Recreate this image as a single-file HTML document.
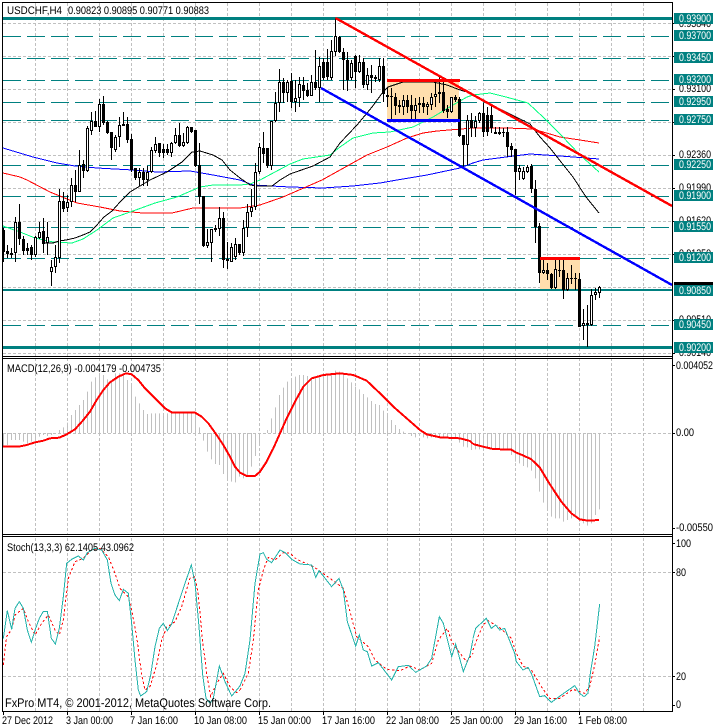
<!DOCTYPE html>
<html><head><meta charset="utf-8"><title>USDCHF,H4</title>
<style>html,body{margin:0;padding:0;background:#fff;width:713px;height:728px;overflow:hidden}svg{display:block}text{font-family:"Liberation Sans",sans-serif;font-size:11px;fill:#000}</style></head>
<body>
<svg width="713" height="728" viewBox="0 0 713 728" xmlns="http://www.w3.org/2000/svg" shape-rendering="crispEdges" fill="none">
<!-- grid -->
<path stroke="#c0c0c0" stroke-dasharray="3 2" d="M3 23.5H672M3 56.5H672M3 89.5H672M3 122.5H672M3 155.5H672M3 188.5H672M3 221.5H672M3 254.5H672M3 287.5H672M3 320.5H672M3 353.5H672M3 433.5H672M3 572.5H672M3 676.5H672"/>
<path stroke="#c0c0c0" stroke-dasharray="3 2" d="M35.5 3V711M67.5 3V711M99.5 3V711M131.5 3V711M163.5 3V711M195.5 3V711M227.5 3V711M259.5 3V711M291.5 3V711M323.5 3V711M355.5 3V711M387.5 3V711M419.5 3V711M451.5 3V711M483.5 3V711M515.5 3V711M547.5 3V711M579.5 3V711M611.5 3V711M643.5 3V711"/>
<rect x="3" y="357" width="669" height="1" fill="#fff"/><rect x="3" y="535" width="669" height="1" fill="#fff"/>
<!-- horizontal levels -->
<path stroke="#008080" stroke-dasharray="18 6" d="M3 36.5H672M3 58.5H672M3 80.5H672M3 102.5H672M3 120.5H672M3 165.5H672M3 196.5H672M3 227.5H672M3 258.5H672M3 325.5H672"/>
<rect x="3" y="17" width="669" height="3" fill="#008080"/>
<rect x="3" y="289" width="669" height="2" fill="#008080"/>
<rect x="3" y="346" width="669" height="3" fill="#008080"/>
<!-- boxes -->
<rect x="387" y="80" width="72" height="41" fill="#ffdead"/>
<rect x="540" y="258" width="40" height="31" fill="#ffdead"/>
<!-- moving averages -->
<polyline stroke="#0000ff" points="3,148 33,157 57,163 75,166 97,168 133,170 157,172 190,171 213,175 240,180 253,185 290,187 323,188 353,186 380,183 397,180 427,175 460,168 473,163 483,160 506,157 530,154 560,156 599,159"/>
<polyline stroke="#ff0000" points="3,173 20,177 27,180 50,192 77,203 100,207 120,211 143,213 172,213 193,208 240,208 260,205 283,197 322,180 340,170 367,155 387,147 407,138 423,133 437,131 473,128 506,128 533,129 560,137 580,140 599,143"/>
<polyline stroke="#00ff7f" points="3,226 20,232 35,238 53,242 72,243 83,239 97,230 113,218 133,211 155,203 177,197 200,187 213,185 240,185 250,184 260,180 290,164 303,159 330,155 340,147 353,138 373,133 390,132 413,127 433,117 453,105 467,97 473,95 490,93 506,97 528,103 543,117 561,135 580,155 599,172"/>
<polyline stroke="#000" points="43,243 53,243 59,241 66,240 75,238 83,235 90,232 96,226 104,217 112,211 120,202 130,192 140,186 150,180 167,172 182,162 192,152 200,151 213,155 222,160 230,170 240,178 250,185 258,186 272,186 280,180 290,174 313,166 330,157 340,143 357,125 372,107 383,92 388,87 403,82 413,82 433,82 447,85 460,90 470,93 486,102 506,112 530,124 540,137 550,148 561,162 573,177 586,197 599,213"/>
<!-- candles: wicks -->
<path stroke="#000" d="M3.5 228V262M7.5 245V258M11.5 248V258M15.5 217V262M19.5 204V245M23.5 236V255M27.5 243V255M31.5 245V260M35.5 236V257M39.5 222V239M43.5 218V253M47.5 222V255M51.5 260V286M55.5 245V273M59.5 189V263M63.5 192V212M67.5 195V212M71.5 178V207M75.5 170V202M79.5 150V192M83.5 160V178M87.5 126V172M91.5 112V135M95.5 111V127M99.5 99V132M103.5 96V125M107.5 121V134M111.5 132V160M115.5 135V152M119.5 117V147M123.5 112V126M127.5 117V143M131.5 134V172M135.5 168V180M139.5 168V186M143.5 168V186M147.5 166V186M151.5 147V173M155.5 137V153M159.5 143V157M163.5 144V158M167.5 144V155M171.5 142V157M175.5 128V144M179.5 123V147M183.5 133V147M187.5 126V144M191.5 127V133M195.5 130V167M199.5 143V204M203.5 196V247M207.5 229V248M211.5 229V262M215.5 225V232M219.5 207V236M223.5 212V268M227.5 242V269M231.5 243V262M235.5 238V260M239.5 244V255M243.5 220V256M247.5 204V237M251.5 189V217M255.5 163V210M259.5 143V174M263.5 132V163M267.5 148V168M271.5 121V170M275.5 92V122M279.5 69V112M283.5 78V103M287.5 80V102M291.5 73V108M295.5 80V112M299.5 77V107M303.5 77V100M307.5 83V97M311.5 75V96M315.5 50V90M319.5 57V102M323.5 58V80M327.5 49V80M331.5 40V80M335.5 18V56M339.5 36V53M343.5 48V90M347.5 52V91M351.5 60V80M355.5 55V88M359.5 55V73M363.5 58V88M367.5 68V90M371.5 65V93M375.5 75V82M379.5 58V82M383.5 58V102M387.5 88V107M391.5 88V120M395.5 93V115M399.5 100V113M403.5 95V115M407.5 95V113M411.5 95V120M415.5 98V120M419.5 97V113M423.5 97V113M427.5 102V115M431.5 93V110M435.5 80V107M439.5 77V103M443.5 78V113M447.5 105V118M451.5 97V113M455.5 95V102M459.5 97V137M463.5 135V168M467.5 115V165M471.5 113V137M475.5 116V137M479.5 112V123M483.5 103V137M487.5 107V136M491.5 106V133M495.5 127V134M499.5 127V135M503.5 128V137M507.5 127V157M511.5 143V157M515.5 149V195M519.5 165V180M523.5 167V180M527.5 165V173M531.5 164V193M535.5 180V243M539.5 223V283M543.5 260V274M547.5 263V280M551.5 273V289M555.5 259V289M559.5 260V277M563.5 259V299M567.5 273V291M571.5 265V284M575.5 273V290M579.5 273V327M583.5 309V340M587.5 305V347M591.5 289V326M595.5 288V300M599.5 286V298"/>
<!-- candles: bodies -->
<path stroke="#000" stroke-width="3" d="M3.5 230V252M7.5 251V254M11.5 253V255M15.5 222V253M19.5 222V239M23.5 239V251M27.5 248V251M31.5 247V255M35.5 237V255M39.5 232V238M43.5 231V244M47.5 237V243M51.5 267V272M55.5 257V267M59.5 201V258M63.5 201V209M67.5 202V208M71.5 185V202M75.5 185V192M79.5 165V192M83.5 164V171M87.5 128V171M91.5 121V131M95.5 121V127M99.5 104V127M103.5 104V123M107.5 122V133M111.5 132V148M115.5 137V150M119.5 125V137M123.5 124V126M127.5 124V140M131.5 139V170M135.5 168V178M139.5 172V178M143.5 172V180M147.5 172V180M151.5 150V172M155.5 144V151M159.5 143V153M163.5 149V153M167.5 149V153M171.5 143V153M175.5 135V143M179.5 135V146M183.5 142V146M187.5 127V143M191.5 127V132M195.5 130V166M199.5 165V197M203.5 196V246M207.5 242V246M211.5 229V243M215.5 228V230M219.5 218V229M223.5 218V260M227.5 259V261M231.5 247V262M235.5 244V257M239.5 244V253M243.5 228V253M247.5 212V228M251.5 207V212M255.5 172V207M259.5 147V172M263.5 148V154M267.5 148V166M271.5 121V166M275.5 103V121M279.5 82V103M283.5 82V93M287.5 82V93M291.5 81V102M295.5 98V102M299.5 84V98M303.5 85V91M307.5 90V96M311.5 82V96M315.5 82V88M319.5 66V88M323.5 62V78M327.5 62V77M331.5 51V78M335.5 36V52M339.5 37V52M343.5 52V60M347.5 60V80M351.5 63V78M355.5 56V72M359.5 62V72M363.5 62V85M367.5 75V85M371.5 75V78M375.5 77V79M379.5 66V80M383.5 66V94M387.5 95V97M391.5 96V97M395.5 97V106M399.5 105V107M403.5 100V107M407.5 100V107M411.5 105V111M415.5 105V111M419.5 103V105M423.5 103V107M427.5 104V107M431.5 97V105M435.5 94V97M439.5 92V94M443.5 92V111M447.5 109V112M451.5 97V112M455.5 97V100M459.5 99V136M463.5 135V145M467.5 120V145M471.5 120V128M475.5 121V128M479.5 113V121M483.5 113V132M487.5 115V132M491.5 115V128M495.5 132V134M499.5 132V134M503.5 132V133M507.5 132V147M511.5 146V150M515.5 149V172M519.5 168V172M523.5 171V179M527.5 167V172M531.5 166V189M535.5 189V227M539.5 226V273M543.5 270V273M547.5 270V274M551.5 274V288M555.5 269V288M559.5 270V271M563.5 270V290M567.5 278V290M571.5 278V279M575.5 278V279M579.5 279V327M583.5 323V326M587.5 323V325M591.5 295V325M595.5 292V295M599.5 287V293"/>
<path stroke="#fff" d="M15.5 223V252M35.5 238V254M39.5 233V237M47.5 238V242M51.5 268V271M55.5 258V266M59.5 202V257M67.5 203V207M71.5 186V201M79.5 166V191M87.5 129V170M91.5 122V130M99.5 105V126M115.5 138V149M119.5 126V136M139.5 173V177M147.5 173V179M151.5 151V171M155.5 145V150M171.5 144V152M175.5 136V142M183.5 143V145M187.5 128V142M207.5 243V245M211.5 230V242M219.5 219V228M231.5 248V261M235.5 245V256M243.5 229V252M247.5 213V227M251.5 208V211M255.5 173V206M259.5 148V171M271.5 122V165M275.5 104V120M279.5 83V102M287.5 83V92M295.5 99V101M299.5 85V97M311.5 83V95M319.5 67V87M331.5 52V77M335.5 37V51M351.5 64V77M359.5 63V71M367.5 76V84M379.5 67V79M403.5 101V106M415.5 106V110M419.5 104V104M427.5 105V106M431.5 98V104M435.5 95V96M439.5 93V93M451.5 98V111M467.5 121V144M475.5 122V127M479.5 114V120M519.5 169V171M523.5 172V178M527.5 168V171M543.5 271V272M555.5 270V287M567.5 279V289M583.5 324V325M591.5 296V324M595.5 293V294M599.5 288V292"/>
<!-- box edges -->
<rect x="387" y="79" width="73" height="3" fill="#ff0000"/>
<rect x="387" y="119" width="73" height="3" fill="#0000ff"/>
<rect x="540" y="257" width="40" height="3" fill="#ff0000"/>
<!-- trend lines -->
<line x1="335.5" y1="18" x2="672" y2="206" stroke="#ff0000" stroke-width="2.4"/>
<line x1="321" y1="88" x2="672" y2="285" stroke="#0000ff" stroke-width="2.4"/>
<!-- MACD histogram -->
<g transform="translate(0,350) scale(1,.33333)"><path stroke="#c0c0c0" d="M3.5 249V290M7.5 249V285M11.5 249V270M15.5 249V270M19.5 249V270M23.5 249V275M27.5 249V280M31.5 249V275M35.5 249V265M39.5 249V260M43.5 249V255M47.5 249V258M51.5 249V255M59.5 249V240M63.5 249V232M67.5 249V218M71.5 249V195M75.5 249V180M79.5 249V165M83.5 249V150M87.5 249V125M91.5 249V95M95.5 249V82M99.5 249V78M103.5 249V75M107.5 249V88M111.5 249V95M115.5 249V70M119.5 249V70M123.5 249V75M127.5 249V90M131.5 249V100M135.5 249V140M139.5 249V160M143.5 249V180M147.5 249V192M151.5 249V190M155.5 249V190M159.5 249V190M163.5 249V190M167.5 249V190M171.5 249V190M175.5 249V190M179.5 249V190M183.5 249V190M187.5 249V190M191.5 249V190M195.5 249V190M199.5 249V232M203.5 249V272M207.5 249V305M211.5 249V328M215.5 249V342M219.5 249V345M223.5 249V372M227.5 249V388M231.5 249V395M235.5 249V397M239.5 249V380M243.5 249V385M247.5 249V375M251.5 249V350M255.5 249V318M259.5 249V280M267.5 249V240M271.5 249V205M275.5 249V172M279.5 249V135M283.5 249V113M287.5 249V95M291.5 249V87M295.5 249V80M299.5 249V75M303.5 249V75M307.5 249V78M311.5 249V82M315.5 249V85M319.5 249V75M323.5 249V75M327.5 249V72M331.5 249V70M335.5 249V62M339.5 249V65M343.5 249V72M347.5 249V85M351.5 249V97M355.5 249V110M359.5 249V118M363.5 249V132M367.5 249V142M371.5 249V153M375.5 249V162M379.5 249V165M383.5 249V182M387.5 249V197M391.5 249V210M395.5 249V225M399.5 249V237M403.5 249V245M411.5 249V258M415.5 249V262M419.5 249V258M423.5 249V262M427.5 249V265M431.5 249V262M435.5 249V262M439.5 249V262M443.5 249V260M447.5 249V265M451.5 249V268M455.5 249V266M459.5 249V278M463.5 249V290M467.5 249V292M471.5 249V300M475.5 249V298M479.5 249V298M483.5 249V295M487.5 249V295M491.5 249V295M495.5 249V295M499.5 249V295M503.5 249V298M507.5 249V300M511.5 249V315M515.5 249V335M519.5 249V340M523.5 249V348M527.5 249V352M531.5 249V362M535.5 249V385M539.5 249V425M543.5 249V458M547.5 249V480M551.5 249V500M555.5 249V505M559.5 249V505M563.5 249V515M567.5 249V510M571.5 249V505M575.5 249V500M579.5 249V515M583.5 249V520M587.5 249V527M591.5 249V520M595.5 249V495M599.5 249V478"/></g>
<!-- MACD line -->
<g stroke="#ff0000" stroke-width="6">
<polyline transform="translate(0,350) scale(.33333)" points="8,290 55,290 80,285 105,277 130,272 150,265 178,263 200,253 225,238 250,210 270,185 290,150 310,120 330,97 355,80 378,70 395,73 415,90 435,115 465,145 495,175 515,187 585,188 605,200 625,220 650,255 670,285 690,320 705,350 720,368"/>
<polyline transform="translate(240,350) scale(.33333)" points="0,368 20,378 45,378 60,365 80,335 100,295 120,250 140,205 165,155 190,110 215,85 250,75 300,70 340,75 380,92 420,130 460,170 500,205 540,240 560,253 600,262 660,265 690,273 699,282"/>
<polyline transform="translate(473,350) scale(.33333)" points="0,282 30,290 60,297 115,299 130,308 150,316 175,328 200,352 230,402 265,455 295,490 320,508 345,512 378,510"/>
</g>
<!-- Stochastic -->
<g stroke="#ff0000" stroke-width="3" stroke-dasharray="7 7">
<polyline transform="translate(0,540) scale(.33333)" points="10,375 20,290 35,268 45,225 70,205 85,245 105,285 125,250 145,225 165,270 178,285 190,240 205,115 225,65 250,55 275,30 300,25 325,50 345,100 360,145 385,170 395,210 410,290 425,405 435,450 450,440 470,375 485,300 500,262 525,245 545,200 570,115 585,110 595,165 607,295 620,400 632,470 650,430 670,400 690,440 710,458 720,450"/>
<polyline transform="translate(240,540) scale(.33333)" points="0,450 25,400 40,300 55,150 70,90 85,52 105,60 130,38 150,40 170,58 220,80 235,90 270,115 310,145 330,215 350,290 385,320 405,360 440,388 480,392 510,378 540,390 575,370 595,300 622,265 635,305 660,340 680,365 699,340"/>
<polyline transform="translate(473,530) scale(.33333)" points="0,360 15,320 30,285 45,272 80,293 115,325 130,370 150,408 175,420 205,470 230,505 260,505 300,478 335,490 350,470 365,405 380,320"/>
</g>
<g stroke="#20b2aa" stroke-width="3">
<polyline transform="translate(0,540) scale(.33333)" points="10,295 22,212 35,268 45,205 58,185 70,205 82,270 94,307 107,265 118,235 130,214 142,214 154,295 166,312 178,265 190,170 200,70 215,58 235,48 250,60 262,38 285,25 305,30 322,60 333,130 345,165 358,182 370,148 385,160 395,250 405,360 415,450 422,468 440,455 452,405 465,320 478,265 490,250 502,272 515,252 540,175 555,130 574,75 585,130 597,260 608,405 618,475 630,490 640,475 658,378 675,425 695,468 720,438"/>
<polyline transform="translate(240,540) scale(.33333)" points="0,438 15,400 30,300 45,130 60,42 70,38 80,58 95,68 120,30 135,38 155,58 180,72 215,75 227,112 237,92 275,140 297,115 310,150 322,245 347,318 358,285 370,330 382,335 395,378 415,368 455,420 475,380 505,376 527,397 560,378 575,355 598,230 610,250 635,350 647,312 670,395 690,345 699,298"/>
<polyline transform="translate(473,530) scale(.33333)" points="0,325 8,295 40,265 55,295 68,285 80,300 95,295 125,370 130,395 150,420 165,412 175,430 200,500 215,497 235,517 275,488 305,467 320,490 333,500 345,490 352,430 365,350 380,222"/>
</g>
<!-- frames -->
<path stroke="#000" d="M2.5 2.5H672.5V711.5H2.5ZM2.5 356.5H672.5M2.5 358.5H672.5M2.5 534.5H672.5M2.5 536.5H672.5"/>
<!-- ticks -->
<path stroke="#000" d="M672 23.5H675M672 56.5H675M672 89.5H675M672 122.5H675M672 155.5H675M672 188.5H675M672 221.5H675M672 254.5H675M672 320.5H675M672 353.5H675M672 365.5H675M672 433.5H675M672 528.5H675M672 543.5H675M672 572.5H675M672 676.5H675M672 705.5H675M3.5 711V715M67.5 711V715M131.5 711V715M195.5 711V715M259.5 711V715M323.5 711V715M387.5 711V715M451.5 711V715M515.5 711V715M579.5 711V715"/>
<!-- axis price text -->
<g text-rendering="geometricPrecision">
<text x="679" y="27" textLength="32" lengthAdjust="spacingAndGlyphs">0.93840</text>
<text x="679" y="92" textLength="32" lengthAdjust="spacingAndGlyphs">0.93100</text>
<text x="679" y="158" textLength="32" lengthAdjust="spacingAndGlyphs">0.92360</text>
<text x="679" y="191" textLength="32" lengthAdjust="spacingAndGlyphs">0.91990</text>
<text x="679" y="224" textLength="32" lengthAdjust="spacingAndGlyphs">0.91620</text>
<text x="679" y="257" textLength="32" lengthAdjust="spacingAndGlyphs">0.91250</text>
<text x="679" y="323" textLength="32" lengthAdjust="spacingAndGlyphs">0.90510</text>
<text x="679" y="356" textLength="32" lengthAdjust="spacingAndGlyphs">0.90140</text>
<rect x="674" y="282" width="39" height="11" fill="#000"/>
<rect x="674" y="13" width="39" height="11" fill="#008080"/>
<rect x="674" y="30" width="39" height="11" fill="#008080"/>
<rect x="674" y="52" width="39" height="11" fill="#008080"/>
<rect x="674" y="74" width="39" height="11" fill="#008080"/>
<rect x="674" y="96" width="39" height="11" fill="#008080"/>
<rect x="674" y="114" width="39" height="11" fill="#008080"/>
<rect x="674" y="159" width="39" height="11" fill="#008080"/>
<rect x="674" y="190" width="39" height="11" fill="#008080"/>
<rect x="674" y="221" width="39" height="11" fill="#008080"/>
<rect x="674" y="252" width="39" height="11" fill="#008080"/>
<rect x="674" y="285" width="39" height="11" fill="#008080"/>
<rect x="674" y="319" width="39" height="11" fill="#008080"/>
<rect x="674" y="342" width="39" height="11" fill="#008080"/>
<g style="fill:#fff">
<text style="fill:#fff" x="679" y="22" textLength="32" lengthAdjust="spacingAndGlyphs">0.93900</text>
<text style="fill:#fff" x="679" y="39" textLength="32" lengthAdjust="spacingAndGlyphs">0.93700</text>
<text style="fill:#fff" x="679" y="61" textLength="32" lengthAdjust="spacingAndGlyphs">0.93450</text>
<text style="fill:#fff" x="679" y="83" textLength="32" lengthAdjust="spacingAndGlyphs">0.93200</text>
<text style="fill:#fff" x="679" y="105" textLength="32" lengthAdjust="spacingAndGlyphs">0.92950</text>
<text style="fill:#fff" x="679" y="123" textLength="32" lengthAdjust="spacingAndGlyphs">0.92750</text>
<text style="fill:#fff" x="679" y="168" textLength="32" lengthAdjust="spacingAndGlyphs">0.92250</text>
<text style="fill:#fff" x="679" y="199" textLength="32" lengthAdjust="spacingAndGlyphs">0.91900</text>
<text style="fill:#fff" x="679" y="230" textLength="32" lengthAdjust="spacingAndGlyphs">0.91550</text>
<text style="fill:#fff" x="679" y="261" textLength="32" lengthAdjust="spacingAndGlyphs">0.91200</text>
<text style="fill:#fff" x="679" y="294" textLength="32" lengthAdjust="spacingAndGlyphs">0.90850</text>
<text style="fill:#fff" x="679" y="328" textLength="32" lengthAdjust="spacingAndGlyphs">0.90450</text>
<text style="fill:#fff" x="679" y="351" textLength="32" lengthAdjust="spacingAndGlyphs">0.90200</text>
</g>
<text x="676" y="369" textLength="37" lengthAdjust="spacingAndGlyphs">0.004052</text>
<text x="676" y="436" textLength="18" lengthAdjust="spacingAndGlyphs">0.00</text>
<text x="676" y="531" textLength="37" lengthAdjust="spacingAndGlyphs">-0.00550</text>
<text x="676" y="547" textLength="15" lengthAdjust="spacingAndGlyphs">100</text>
<text x="676" y="576" textLength="10" lengthAdjust="spacingAndGlyphs">80</text>
<text x="676" y="680" textLength="10" lengthAdjust="spacingAndGlyphs">20</text>
<text x="676" y="708" textLength="5" lengthAdjust="spacingAndGlyphs">0</text>
<!-- labels -->
<text x="7" y="14" textLength="55" lengthAdjust="spacingAndGlyphs">USDCHF,H4</text>
<text x="68" y="14" textLength="141" lengthAdjust="spacingAndGlyphs">0.90823 0.90895 0.90771 0.90883</text>
<text x="7" y="372" textLength="154" lengthAdjust="spacingAndGlyphs">MACD(12,26,9) -0.004179 -0.004735</text>
<text x="7" y="551" textLength="127" lengthAdjust="spacingAndGlyphs">Stoch(13,3,3) 62.1405 43.0962</text>
<text x="5" y="707" textLength="266" lengthAdjust="spacingAndGlyphs" style="font-size:12.5px">FxPro MT4, © 2001-2012, MetaQuotes Software Corp.</text>
<text x="2" y="724" textLength="51" lengthAdjust="spacingAndGlyphs">27 Dec 2012</text>
<text x="66" y="724" textLength="47" lengthAdjust="spacingAndGlyphs">3 Jan 00:00</text>
<text x="130" y="724" textLength="48" lengthAdjust="spacingAndGlyphs">7 Jan 16:00</text>
<text x="194" y="724" textLength="53" lengthAdjust="spacingAndGlyphs">10 Jan 08:00</text>
<text x="258" y="724" textLength="53" lengthAdjust="spacingAndGlyphs">15 Jan 00:00</text>
<text x="322" y="724" textLength="53" lengthAdjust="spacingAndGlyphs">17 Jan 16:00</text>
<text x="386" y="724" textLength="53" lengthAdjust="spacingAndGlyphs">22 Jan 08:00</text>
<text x="450" y="724" textLength="53" lengthAdjust="spacingAndGlyphs">25 Jan 00:00</text>
<text x="514" y="724" textLength="53" lengthAdjust="spacingAndGlyphs">29 Jan 16:00</text>
<text x="578" y="724" textLength="49" lengthAdjust="spacingAndGlyphs">1 Feb 08:00</text>
</g>
</svg>
</body></html>
